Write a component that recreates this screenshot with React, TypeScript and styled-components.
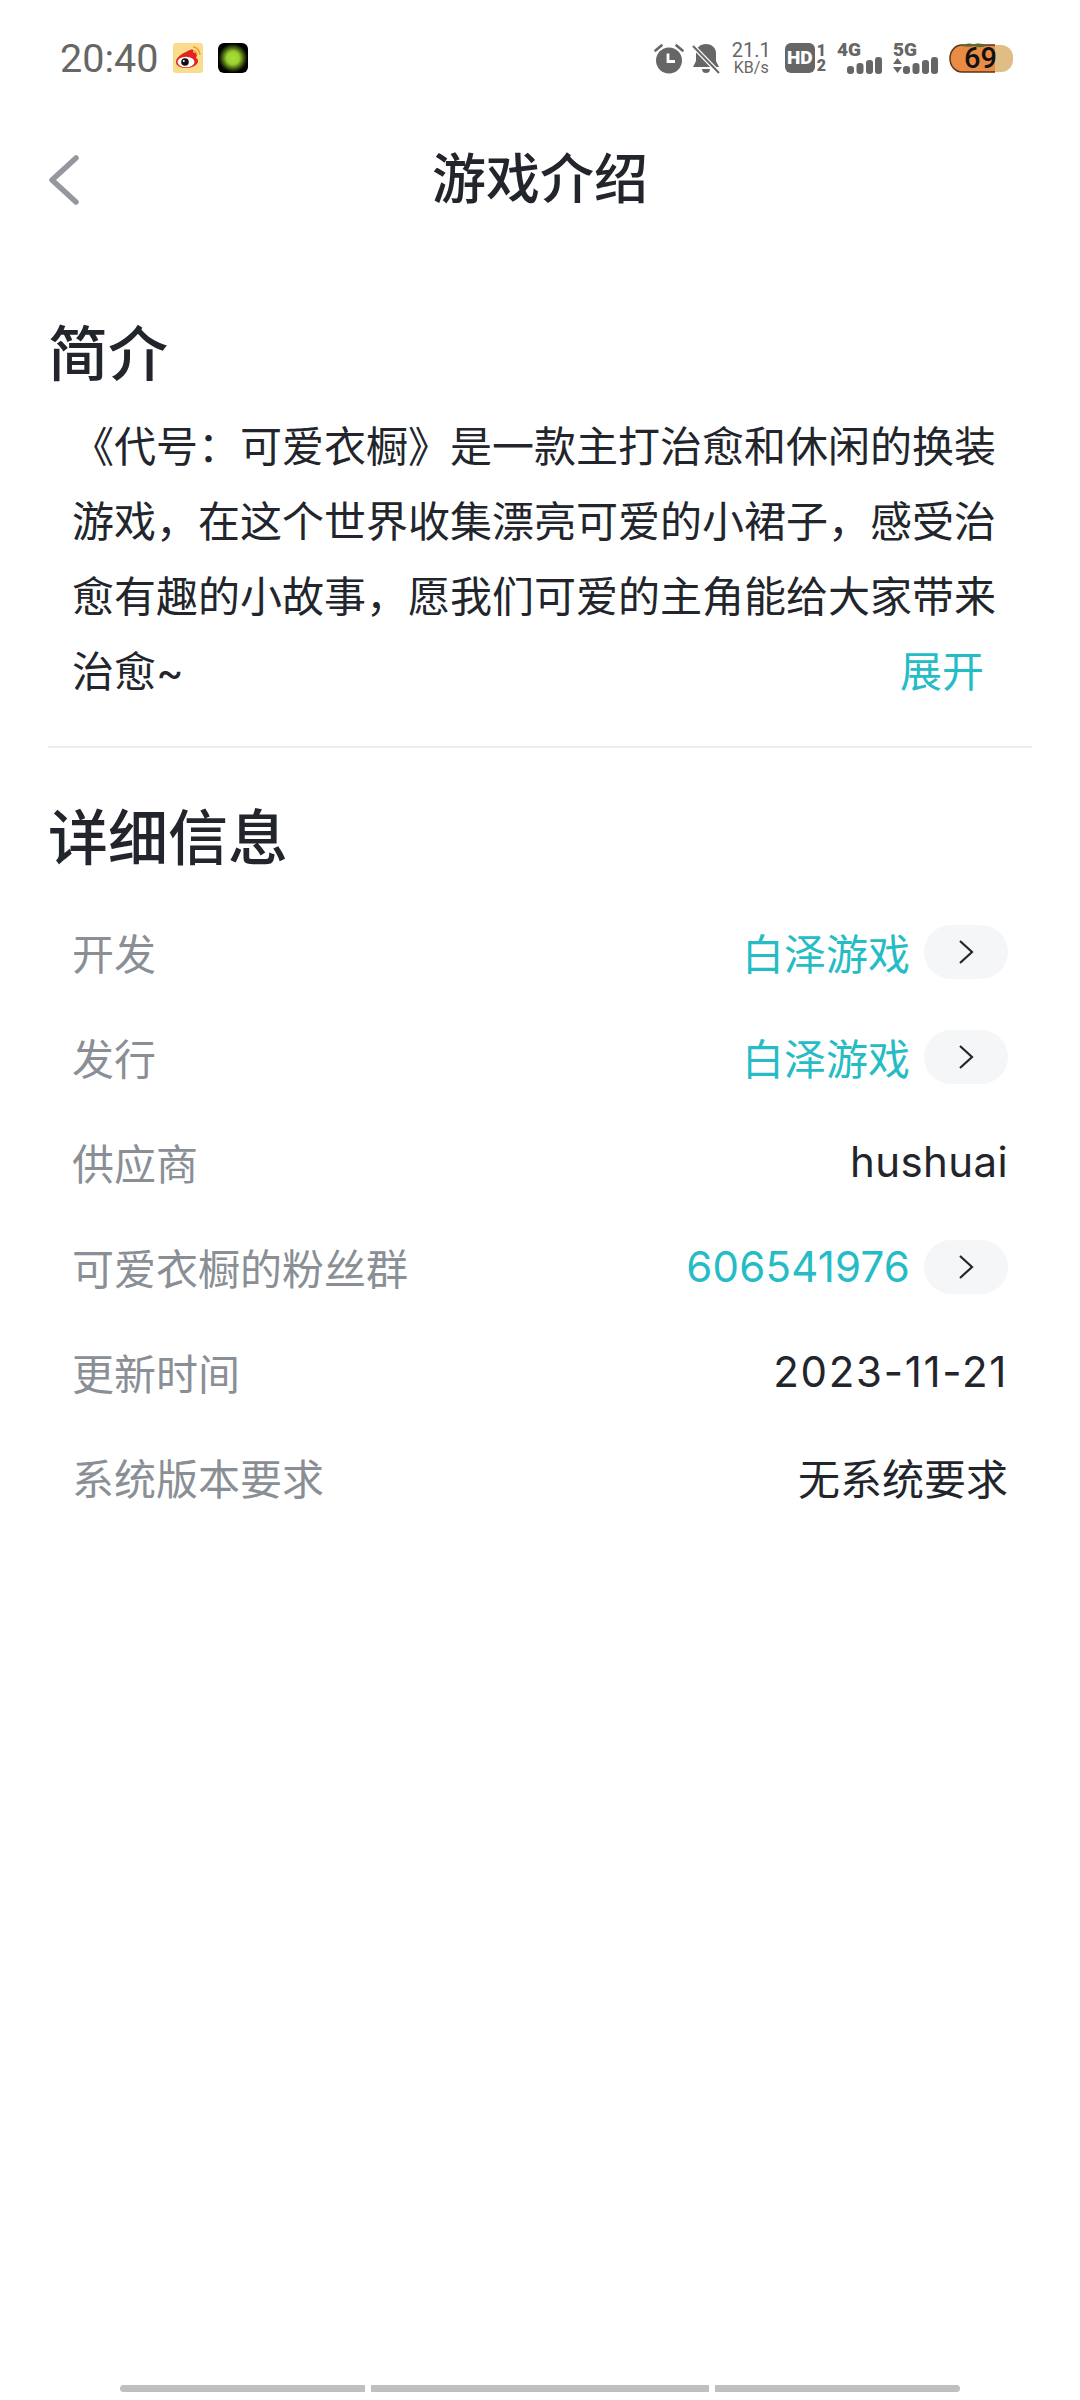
import styled, { createGlobalStyle } from "styled-components";

const GlobalStyle = createGlobalStyle`
  html, body {
    margin: 0;
    padding: 0;
    background: #fff;
    font-family: "Inter", "Noto Sans CJK SC", sans-serif;
  }
`;

const infoRows = [
  { label: "开发", value: "白泽游戏", link: true, spacing: 0 },
  { label: "发行", value: "白泽游戏", link: true, spacing: 0 },
  { label: "供应商", value: "hushuai", link: false, spacing: 0.4 },
  { label: "可爱衣橱的粉丝群", value: "606541976", link: true, spacing: 0.2 },
  { label: "更新时间", value: "2023-11-21", link: false, spacing: 1.7 },
  { label: "系统版本要求", value: "无系统要求", link: false, spacing: 0 },
];

const AlarmIcon = () => (
  <svg width="30" height="31" viewBox="0 0 30 31">
    <circle cx="15" cy="17.5" r="13" fill="#666" />
    <path d="M14 10.500v8h7" fill="none" stroke="#fff" strokeWidth="2.800" />
    <path d="M1.500 7.500l6-5M28.500 7.500l-6-5" stroke="#666" strokeWidth="2.600" strokeLinecap="round" />
  </svg>
);

const MuteIcon = () => (
  <svg width="28" height="31" viewBox="0 0 28 31">
    <path d="M14 1c6 0 10 4 10 9v8l3 6H1l3-6V10c0-5 4-9 10-9z" fill="#666" />
    <path d="M10 26h8c0 3-2 4-4 4s-4-1-4-4z" fill="#666" />
    <path d="M0 2l27 28" stroke="#fff" strokeWidth="4.500" />
    <path d="M1 3l26 27" stroke="#666" strokeWidth="2" />
  </svg>
);

const Bars = () => (
  <svg width="35" height="17" viewBox="0 0 35 17">
    <rect x="0" y="9" width="7" height="8" rx="3" fill="#666" />
    <rect x="9.500" y="6" width="7" height="11" rx="3" fill="#666" />
    <rect x="19" y="3" width="7" height="14" rx="3" fill="#666" />
    <rect x="28" y="0" width="7" height="17" rx="3" fill="#666" />
  </svg>
);

const Arrows = () => (
  <svg width="9" height="17" viewBox="0 0 9 17">
    <path d="M4.500 1L9 7H0zM0 10h9l-4.500 6z" fill="#666" />
  </svg>
);

const WeiboIcon = () => (
  <svg width="30" height="30" viewBox="0 0 30 30">
    <rect width="30" height="30" rx="3" fill="#fbdc8c" />
    <path d="M13 9c3-2 6-3 7-2 1 1 0 3 0 3 2-1 4 0 4 2 0 1-1 2-1 3 2 1 2 2 2 3 0 4-6 7-11 7-6 0-11-2-11-6 0-4 5-8 10-10z" fill="#e3231f" />
    <ellipse cx="13" cy="19" rx="8.500" ry="5.200" fill="#fff" />
    <circle cx="12" cy="19" r="3.800" fill="#111" />
    <circle cx="10.800" cy="18" r="1" fill="#fff" />
    <path d="M20 4c3 0 7 3 7 8M20 7.500c2 0 4 2 4 4.500" fill="none" stroke="#e8a23a" strokeWidth="1.600" />
  </svg>
);

const Battery = () => (
  <svg width="64" height="30" viewBox="0 0 64 30">
    <rect x="30" y="2" width="34" height="27" rx="12" fill="#e0bd85" />
    <path d="M46 2H13C6 2 1 8 1 15.500S6 29 13 29h33z" fill="#e98b45" />
    <path d="M46 2H13C6 2 1 8 1 15.500S6 29 13 29h33" fill="none" stroke="#5a3518" strokeWidth="1.500" />
    <path d="M13 3c4-3 9-3 11-1 4-2 9-2 13 1-5 2-9 1-12 0-4 1-8 1-12 0z" fill="#5b6a2e" />
  </svg>
);

const App = () => {
  return (
    <Page>
      <GlobalStyle />
      <StatusBar>
        <StatusLeft>
          <Clock>20:40</Clock>
          <WeiboIcon />
          <AppDot />
        </StatusLeft>
        <StatusRight>
          <SoundIcons>
            <AlarmIcon />
            <MuteIcon />
          </SoundIcons>
          <Speed>
            <span>21.1</span>
            <span>KB/s</span>
          </Speed>
          <SimGroup>
            <HdBadge>HD</HdBadge>
            <SimNumbers>
              <span>1</span>
              <span>2</span>
            </SimNumbers>
          </SimGroup>
          <Signal>
            <NetLabel>4G</NetLabel>
            <SignalRow>
              <Bars />
            </SignalRow>
          </Signal>
          <Signal>
            <NetLabel>5G</NetLabel>
            <SignalRow>
              <Arrows />
              <Bars />
            </SignalRow>
          </Signal>
          <BatteryWrap>
            <Battery />
            <BatteryLevel>69</BatteryLevel>
          </BatteryWrap>
        </StatusRight>
      </StatusBar>

      <Header>
        <BackButton>
          <svg width="30" height="50" viewBox="0 0 30 50">
            <path d="M27 3L3 25l24 22" fill="none" stroke="#94979d" strokeWidth="5.500" strokeLinecap="round" strokeLinejoin="round" />
          </svg>
        </BackButton>
        <Title>游戏介绍</Title>
      </Header>

      <Section>
        <SectionTitle>简介</SectionTitle>
        <Intro>
          <IntroText>
            《代号：可爱衣橱》是一款主打治愈和休闲的换装游戏，在这个世界收集漂亮可爱的小裙子，感受治愈有趣的小故事，愿我们可爱的主角能给大家带来治愈~
            <Expand>展开</Expand>
          </IntroText>
        </Intro>
      </Section>

      <Divider />

      <Section>
        <DetailTitle>详细信息</DetailTitle>
        <InfoList>
          {infoRows.map((row) => (
            <InfoRow key={row.label}>
              <InfoLabel>{row.label}</InfoLabel>
              <InfoValue $link={row.link} $spacing={row.spacing}>
                {row.value}
                {row.link && (
                  <ArrowPill>
                    <svg width="16" height="26" viewBox="0 0 16 26">
                      <path d="M2 2l12 11L2 24" fill="none" stroke="#23252b" strokeWidth="2.200" />
                    </svg>
                  </ArrowPill>
                )}
              </InfoValue>
            </InfoRow>
          ))}
        </InfoList>
      </Section>

      <HomeBar>
        <HomeSegment $width={245} />
        <HomeSegment $width={338} />
        <HomeSegment $width={245} />
      </HomeBar>
    </Page>
  );
};

export default App;

const Page = styled.div`
  width: 1080px;
  height: 2400px;
  position: relative;
  background: #fff;
  overflow: hidden;
`;

const StatusBar = styled.div`
  height: 58px;
  padding: 29px 67px 0 60px;
  display: flex;
  align-items: center;
  justify-content: space-between;
`;

const StatusLeft = styled.div`
  display: flex;
  align-items: center;
  gap: 15px;
`;

const Clock = styled.span`
  font-family: "Roboto", sans-serif;
  font-size: 39.500px;
  color: #666;
`;

const AppDot = styled.div`
  width: 30px;
  height: 30px;
  border-radius: 6px;
  background: radial-gradient(circle at 50% 50%, #a8e038 0, #9ad02e 30%, #3a5410 52%, #000 68%);
`;

const StatusRight = styled.div`
  display: flex;
  align-items: center;
  gap: 11px;
  font-family: "Roboto", sans-serif;
  color: #666;
`;

const SoundIcons = styled.div`
  display: flex;
  align-items: center;
  gap: 8px;
`;

const Speed = styled.div`
  display: flex;
  flex-direction: column;
  align-items: center;
  margin: 0 3px 0 1px;
  span:first-child {
    font-size: 20px;
    line-height: 19px;
  }
  span:last-child {
    font-size: 16px;
    line-height: 15px;
  }
`;

const SimGroup = styled.div`
  display: flex;
  align-items: center;
  gap: 2px;
`;

const HdBadge = styled.div`
  width: 30px;
  height: 30px;
  border-radius: 6px;
  background: #666;
  color: #fff;
  font-size: 19px;
  font-weight: 900;
  line-height: 30px;
  text-align: center;
`;

const SimNumbers = styled.div`
  display: flex;
  flex-direction: column;
  font-size: 16px;
  font-weight: 900;
  line-height: 15px;
`;

const Signal = styled.div`
  display: flex;
  flex-direction: column;
  width: 45px;
`;

const NetLabel = styled.span`
  font-size: 19px;
  font-weight: 900;
  line-height: 15px;
`;

const SignalRow = styled.div`
  display: flex;
  justify-content: flex-end;
  align-items: center;
  gap: 1px;
`;

const BatteryWrap = styled.div`
  position: relative;
  width: 64px;
  height: 30px;
`;

const BatteryLevel = styled.span`
  position: absolute;
  left: 15px;
  top: 0;
  font-size: 29px;
  font-weight: 500;
  line-height: 30px;
  color: #111;
`;

const Header = styled.div`
  position: relative;
  height: 100px;
  margin-top: 43px;
  display: flex;
  align-items: center;
  justify-content: center;
`;

const BackButton = styled.div`
  position: absolute;
  left: 49px;
  top: 25px;
  display: flex;
`;

const Title = styled.h1`
  margin: 0;
  font-size: 54px;
  font-weight: 500;
  line-height: 76px;
  color: #22252b;
`;

const Section = styled.div`
  padding: 0 48px;
`;

const SectionTitle = styled.h2`
  margin: 80px 0 0;
  font-size: 60px;
  font-weight: 500;
  line-height: 88px;
  color: #22252b;
`;

const Intro = styled.div`
  padding: 11px 24px 0;
`;

const IntroText = styled.p`
  margin: 0;
  font-size: 42px;
  line-height: 75px;
  color: #22252b;
`;

const Expand = styled.span`
  float: right;
  margin-right: 24px;
  color: #26bcc5;
`;

const Divider = styled.div`
  height: 2px;
  margin: 37px 48px 0;
  background: #ececee;
`;

const DetailTitle = styled(SectionTitle)`
  margin-top: 46px;
`;

const InfoList = styled.div`
  display: flex;
  flex-direction: column;
  padding: 17px 24px 0;
`;

const InfoRow = styled.div`
  height: 105px;
  display: flex;
  align-items: center;
  justify-content: space-between;
`;

const InfoLabel = styled.span`
  font-size: 42px;
  color: #8a8f96;
`;

const InfoValue = styled.span<{ $link: boolean; $spacing: number }>`
  display: flex;
  align-items: center;
  gap: 14px;
  font-size: 42px;
  letter-spacing: ${(p) => p.$spacing}px;
  color: ${(p) => (p.$link ? "#26bcc5" : "#22252b")};
`;

const ArrowPill = styled.span`
  width: 84px;
  height: 54px;
  border-radius: 27px;
  background: #f5f6f8;
  display: flex;
  align-items: center;
  justify-content: center;
`;

const HomeBar = styled.div`
  position: absolute;
  left: 120px;
  bottom: 8px;
  display: flex;
  gap: 6px;
`;

const HomeSegment = styled.div<{ $width: number }>`
  width: ${(p) => p.$width}px;
  height: 7px;
  background: #bfbfbf;
  &:first-child {
    border-radius: 4px 0 0 4px;
  }
  &:last-child {
    border-radius: 0 4px 4px 0;
  }
`;
